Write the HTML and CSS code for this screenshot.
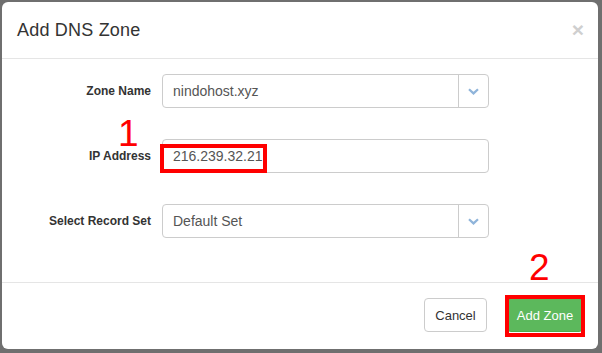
FILE: index.html
```html
<!DOCTYPE html>
<html lang="en">
<head>
    <meta charset="UTF-8">
    <title>Add DNS Zone</title>
    <link rel="stylesheet" href="styles.css">
</head>
<body>
    <div class="backdrop">
        <div class="modal">
            <div class="modal-header">
                <h4 class="modal-title">Add DNS Zone</h4>
                <span class="close">&times;</span>
            </div>

            <div class="modal-body">
                <div class="form-row">
                    <label>Zone Name</label>
                    <div class="input-group">
                        <div class="form-control">nindohost.xyz</div>
                        <span class="addon">
                            <svg width="11" height="7" viewBox="0 0 11 7"><path d="M1 1.2 L5.5 5.4 L10 1.2" fill="none" stroke="#8fb4da" stroke-width="2.2"/></svg>
                        </span>
                    </div>
                </div>

                <div class="form-row">
                    <label>IP Address</label>
                    <div class="input-group">
                        <div class="form-control">216.239.32.21</div>
                        <!-- annotation -->
                        <span class="mark mark-ip"></span>
                        <span class="step step-1">1</span>
                    </div>
                </div>

                <div class="form-row">
                    <label>Select Record Set</label>
                    <div class="input-group">
                        <div class="form-control">Default Set</div>
                        <span class="addon">
                            <svg width="11" height="7" viewBox="0 0 11 7"><path d="M1 1.2 L5.5 5.4 L10 1.2" fill="none" stroke="#8fb4da" stroke-width="2.2"/></svg>
                        </span>
                    </div>
                </div>
            </div>

            <div class="modal-footer">
                <button class="btn btn-default">Cancel</button>
                <div class="btn-wrap">
                    <button class="btn btn-success">Add Zone</button>
                    <span class="mark mark-btn"></span>
                    <span class="step step-2">2</span>
                </div>
            </div>
        </div>
    </div>
</body>
</html>
```

FILE: styles.css
```css
body {
    margin: 0;
    background-color: #6f6f6f;
    font-family: 'Liberation Sans', Arial, sans-serif;
    color: #333;
}
.backdrop {
    padding: 2px 4px 4px 2px;
}
.modal {
    background-color: #fff;
    border-radius: 6px;
    height: 347px;
    box-sizing: border-box;
}
.modal-header {
    display: flex;
    justify-content: space-between;
    align-items: flex-start;
    padding: 15px;
    border-bottom: 1px solid #e5e5e5;
}
.modal-title {
    margin: 0;
    font-size: 18px;
    font-weight: normal;
    line-height: 26px;
    letter-spacing: 0.2px;
}
.close {
    font-size: 21px;
    font-weight: bold;
    line-height: 20px;
    color: #cfcfcf;
    margin-top: 3px;
    margin-right: -1px;
}
.modal-body {
    padding: 15px 15px 44px;
    display: flex;
    flex-direction: column;
    gap: 31px;
}
.form-row {
    display: flex;
    align-items: center;
}
.form-row label {
    width: 134px;
    text-align: right;
    font-size: 12px;
    font-weight: bold;
    margin-right: 11px;
}
.input-group {
    position: relative;
    display: flex;
    width: 327px;
    height: 34px;
    box-sizing: border-box;
    border: 1px solid #ccc;
    border-radius: 4px;
}
.form-control {
    flex: 1;
    padding: 0 10px;
    line-height: 32px;
    font-size: 14px;
    color: #555;
}
.addon {
    width: 29px;
    border-left: 1px solid #ccc;
    display: flex;
    align-items: center;
    justify-content: center;
}
.modal-footer {
    border-top: 1px solid #e5e5e5;
    padding: 15px;
    display: flex;
    justify-content: flex-end;
    align-items: center;
}
.btn {
    height: 34px;
    padding: 0 12px;
    font-family: inherit;
    font-size: 13px;
    white-space: nowrap;
    border-radius: 4px;
    border: 1px solid #ccc;
    background-color: #fff;
    color: #333;
}
.btn-default {
    width: 63px;
    padding: 0;
}
.btn-wrap {
    position: relative;
    margin-left: 20px;
}
.btn-success {
    background-color: #5cb85c;
    border-color: #4cae4c;
    color: #fff;
    width: 76px;
    padding: 0;
}
.mark {
    position: absolute;
    border: 4px solid #f00;
}
.mark-ip {
    left: -3px;
    top: 4px;
    width: 99px;
    height: 21px;
}
.mark-btn {
    left: -2px;
    top: -3px;
    width: 72px;
    height: 34px;
}
.step {
    position: absolute;
    color: #f00;
    font-size: 37px;
    line-height: 27px;
}
.step-1 {
    left: -45px;
    top: -20px;
}
.step-2 {
    left: 22px;
    top: -44px;
}
```
